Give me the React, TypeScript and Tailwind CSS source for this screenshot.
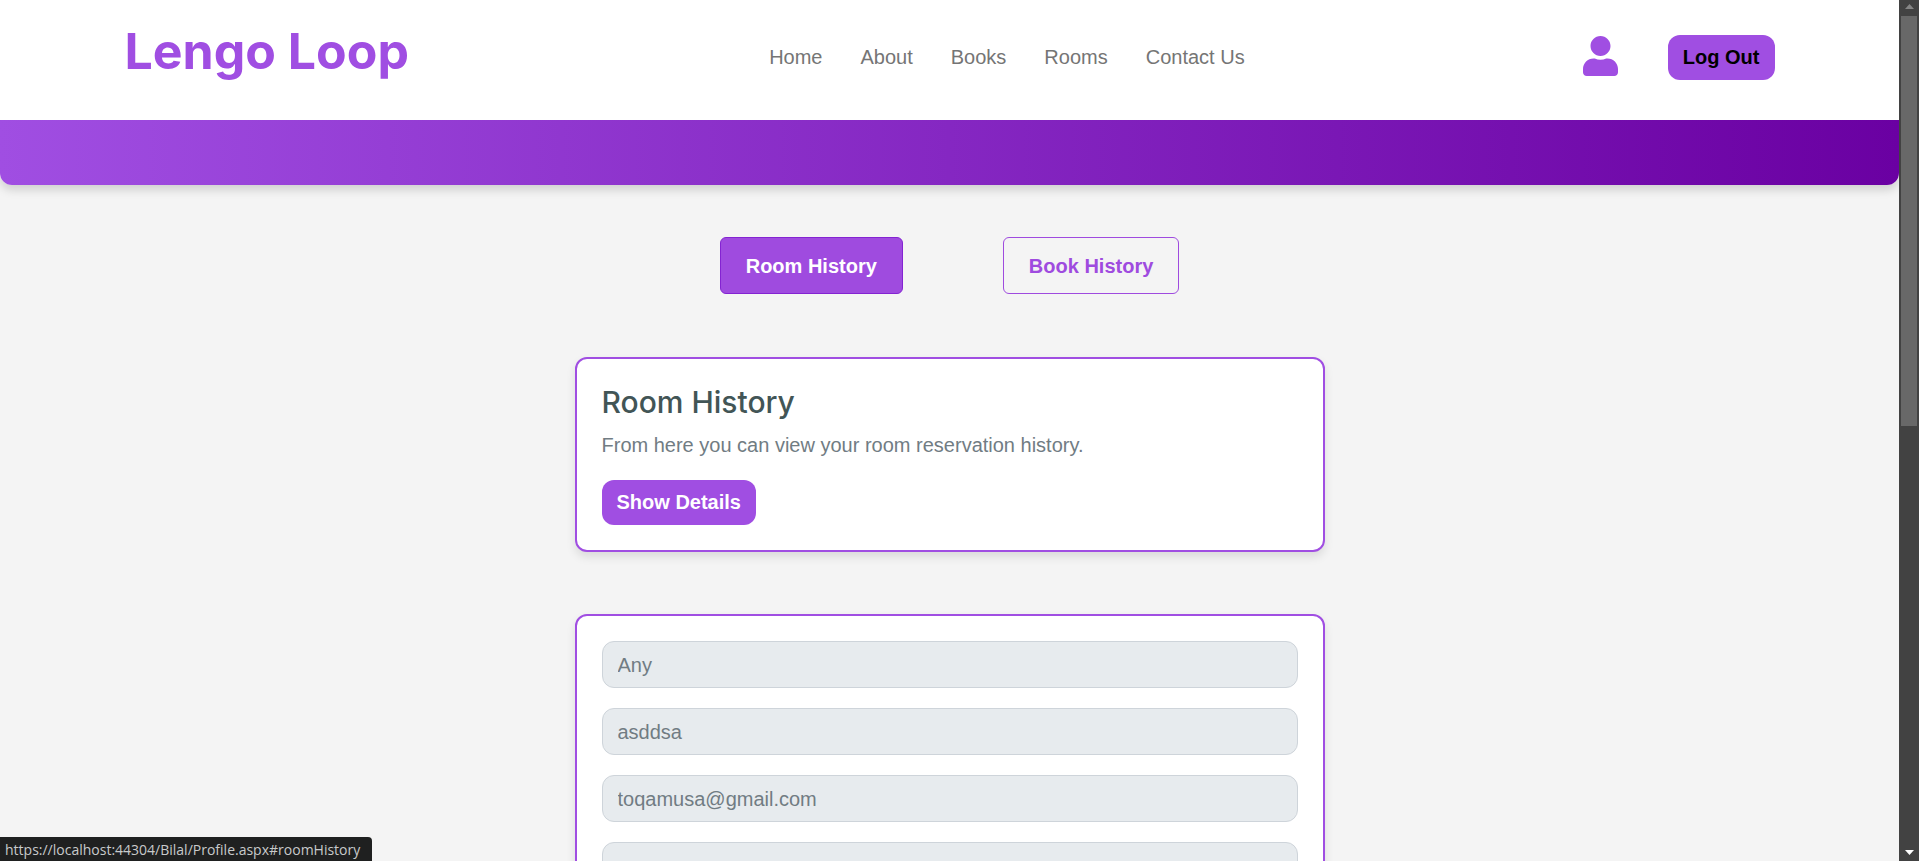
import type { ReactNode } from "react";
import { FaUser } from "react-icons/fa";

const links = ["Home", "About", "Books", "Rooms", "Contact Us"];

const fields = [
  { id: "room", label: "Room", value: "Any" },
  { id: "name", label: "Name", value: "asddsa" },
  { id: "email", label: "Email", value: "toqamusa@gmail.com" },
  { id: "phone", label: "Phone", value: "" },
];

function Header() {
  return (
    <header className="rounded-b-xl bg-white shadow-[0_5px_10px_rgba(0,0,0,0.15)]">
      <div className="mx-auto flex h-[120px] max-w-[1650px] items-start justify-between pt-6">
        <a
          href="#home"
          className="font-['Inter',sans-serif] text-[50px] leading-[54px] font-bold text-[#a04ee2]"
        >
          Lengo Loop
        </a>
        <nav className="flex gap-[38px] pt-[18px] pl-[22px]">
          {links.map((link) => (
            <a key={link} href="#" className="text-xl leading-[30px] text-[#757575]">
              {link}
            </a>
          ))}
        </nav>
        <div className="flex items-start gap-[50px] pt-[11px]">
          <a href="#profile" aria-label="Profile" className="text-[#a04ee2]">
            <FaUser className="h-[42px] w-[35px]" />
          </a>
          <button
            type="button"
            className="h-[45px] rounded-xl bg-[#a04ee2] px-[15px] pb-0.5 text-xl font-bold text-black"
          >
            Log Out
          </button>
        </div>
      </div>
      <div className="h-[65px] rounded-b-xl bg-linear-to-r/srgb from-[#a04ee2] to-[#6a00a2]" />
    </header>
  );
}

function Card({ children }: { children: ReactNode }) {
  return (
    <section className="w-full max-w-[750px] rounded-xl border-2 border-[#a04ee2] bg-white p-[25px] shadow-[0_5px_10px_rgba(0,0,0,0.1)]">
      {children}
    </section>
  );
}

function Scrollbar() {
  return (
    <div aria-hidden="true" className="flex w-5 shrink-0 flex-col items-center bg-[#424242]">
      <svg viewBox="0 0 20 16" className="h-4 w-5" fill="#868686">
        <path d="M6 9L10.500 4L15 9Z" />
      </svg>
      <div className="flex w-full grow flex-col px-0.5">
        <div className="h-[410px] bg-[#686868]" />
      </div>
      <svg viewBox="0 0 20 16" className="h-4 w-5" fill="#ffffff">
        <path d="M6 5L10.500 10L15 5Z" />
      </svg>
    </div>
  );
}

export default function App() {
  return (
    <div className="flex h-screen overflow-hidden bg-[#f4f4f4] font-['Liberation_Sans',Arial,sans-serif] text-xl">
      <div className="min-w-0 grow overflow-y-auto [scrollbar-width:none]">
        <Header />
        <main className="flex flex-col items-center pt-[52px] pb-16">
          <div className="mb-[63px] flex gap-[100px] font-bold">
            <a
              href="#roomHistory"
              className="rounded-md border border-[#8423d2] bg-[#9f4bdf] px-[25px] pt-[13px] pb-3 leading-[30px] text-white"
            >
              Room History
            </a>
            <a
              href="#bookHistory"
              className="rounded-md border border-[#9f4bdf] px-[25px] pt-[13px] pb-3 leading-[30px] text-[#9f4bdf]"
            >
              Book History
            </a>
          </div>
          <div className="flex w-full flex-col items-center gap-[62px]">
            <Card>
              <h2 className="mb-2.5 font-['Inter',sans-serif] text-[30px] leading-9 font-medium text-[#425556]">
                Room History
              </h2>
              <p className="mb-5 leading-[30px] text-[#717c83]">
                From here you can view your room reservation history.
              </p>
              <button
                type="button"
                className="block h-[45px] rounded-xl bg-[#a04ee2] px-[15px] pb-0.5 font-bold text-white"
              >
                Show Details
              </button>
            </Card>
            <Card>
              <form className="flex flex-col gap-5">
                {fields.map((field) => (
                  <input
                    key={field.id}
                    id={field.id}
                    aria-label={field.label}
                    readOnly
                    value={field.value}
                    className="h-[47px] w-full rounded-xl border border-[#ced4da] bg-[#e7ebee] px-[15px] pt-0.5 text-[#717c83]"
                  />
                ))}
              </form>
            </Card>
          </div>
        </main>
      </div>
      <Scrollbar />
      <div className="fixed bottom-0 left-0 rounded-tr bg-[#1f2020] pt-0.5 pr-3 pl-[5px] font-['Open_Sans',sans-serif] text-sm leading-[22px] text-[#c8cacb]">
        https://localhost:44304/Bilal/Profile.aspx#roomHistory
      </div>
    </div>
  );
}
